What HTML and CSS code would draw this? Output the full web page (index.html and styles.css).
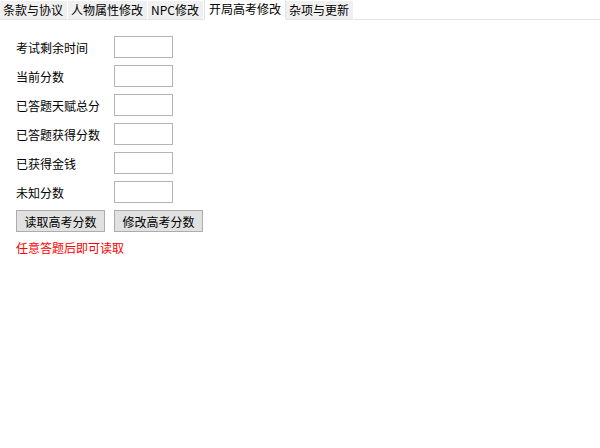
FILE: index.html
```html
<!DOCTYPE html>
<html lang="zh-CN">
<head>
    <meta charset="UTF-8">
    <title>开局高考修改</title>
    <link rel="stylesheet" href="styles.css">
</head>
<body>
    <div class="tabs">
        <div class="tab">条款与协议</div>
        <div class="tab">人物属性修改</div>
        <div class="tab">NPC修改</div>
        <div class="tab active">开局高考修改</div>
        <div class="tab">杂项与更新</div>
        <div class="tab-fill"></div>
    </div>

    <div class="panel">
        <div class="row"><label>考试剩余时间</label><input type="text"></div>
        <div class="row"><label>当前分数</label><input type="text"></div>
        <div class="row"><label>已答题天赋总分</label><input type="text"></div>
        <div class="row"><label>已答题获得分数</label><input type="text"></div>
        <div class="row"><label>已获得金钱</label><input type="text"></div>
        <div class="row"><label>未知分数</label><input type="text"></div>

        <div class="buttons">
            <button class="btn">读取高考分数</button>
            <button class="btn">修改高考分数</button>
        </div>

        <div class="hint">任意答题后即可读取</div>
    </div>
</body>
</html>
```

FILE: styles.css
```css
* {
    margin: 0;
    padding: 0;
    box-sizing: border-box;
}

body {
    font-family: "Noto Sans CJK SC", "Noto Sans", sans-serif;
    font-size: 12px;
    color: #000;
    background: #fff;
    width: 600px;
    height: 448px;
    overflow: hidden;
}

.tabs {
    display: flex;
    align-items: flex-end;
    height: 20px;
}

.tab {
    height: 19px;
    line-height: 18px;
    padding: 0 4px 0 3px;
    background: #f0f0f0;
    border-right: 1px solid #fff;
    border-bottom: 1px solid #e3e3e3;
    white-space: nowrap;
}

.tab.active {
    height: 20px;
    padding: 0 4px;
    background: #fff;
    border-bottom: 1px solid #fff;
    border-left: 1px solid #e3e3e3;
    border-right: 1px solid #e3e3e3;
}

.tab-fill {
    flex: 1;
    border-bottom: 1px solid #e3e3e3;
}

.panel {
    padding: 16px 16px;
}

.row {
    display: flex;
    align-items: center;
    height: 22px;
    margin-bottom: 7px;
}

.row label {
    width: 98px;
}

.row input {
    width: 59px;
    height: 22px;
    border: 1px solid #b4b4b4;
    background: #fff;
    font: inherit;
}

.buttons {
    display: flex;
    gap: 9px;
}

.btn {
    width: 89px;
    height: 22px;
    font: inherit;
    background: #e1e1e1;
    border: 1px solid #adadad;
    color: #000;
}

.hint {
    margin-top: 7px;
    color: #ff0000;
    line-height: 18px;
}
```
